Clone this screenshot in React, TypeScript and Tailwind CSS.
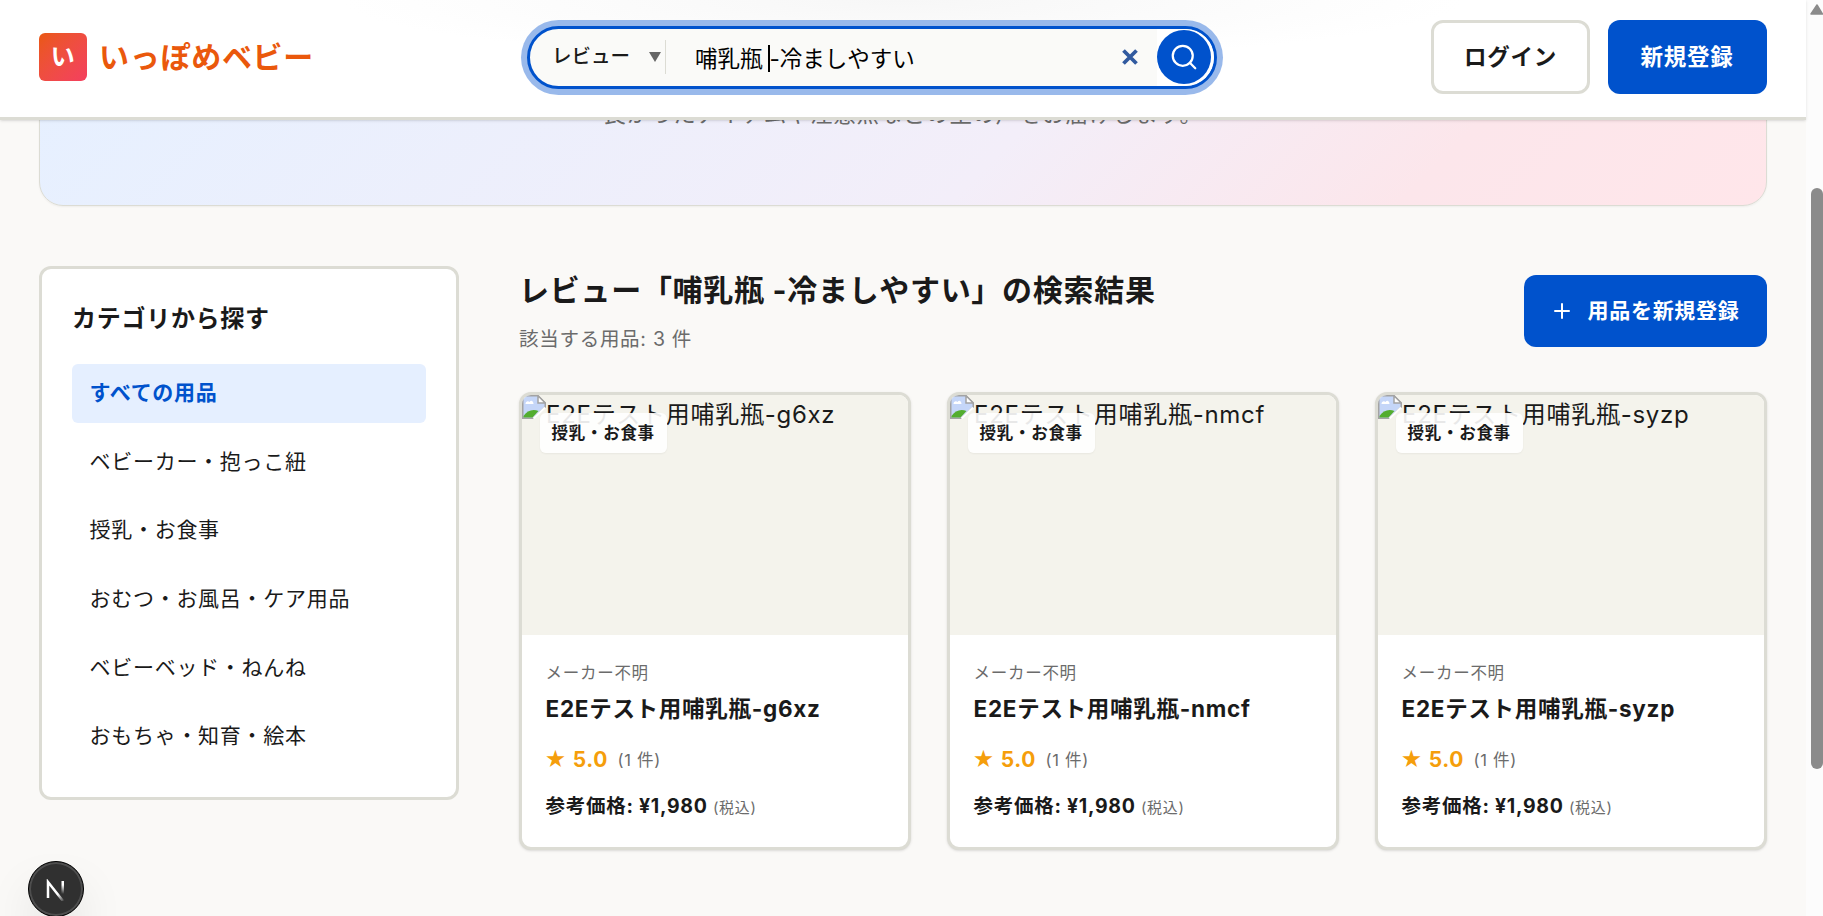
import { Search, Plus } from 'lucide-react';

interface Product {
  id: string;
  name: string;
  maker: string;
  category: string;
  rating: string;
  reviews: number;
  price: string;
}

const categories = [
  'すべての用品',
  'ベビーカー・抱っこ紐',
  '授乳・お食事',
  'おむつ・お風呂・ケア用品',
  'ベビーベッド・ねんね',
  'おもちゃ・知育・絵本',
];

const products: Product[] = ['g6xz', 'nmcf', 'syzp'].map(id => ({
  id,
  name: `E2Eテスト用哺乳瓶-${id}`,
  maker: 'メーカー不明',
  category: '授乳・お食事',
  rating: '5.0',
  reviews: 1,
  price: '1,980',
}));

function BrokenImageIcon() {
  return (
    <svg viewBox="0 0 24 24" className="w-6 h-6 shrink-0">
      <path d="M0.75 0.75H16L23.250 8V12L11 23.250H0.75Z" fill="#c5d6f8" stroke="#a3a3a3" strokeWidth="1.500" />
      <path d="M3.500 9C3.500 6.500 6 5.500 7.500 7C9 4.500 11.500 6 11.500 9Z" fill="#fff" />
      <path d="M1.500 22.500V21C5 15.500 11 13.500 16.500 16L10.500 22.500Z" fill="#53ad2f" />
      <path d="M16 0.75V8H23.250Z" fill="#fff" stroke="#a3a3a3" strokeWidth="1.500" />
      <path d="M23 12.500L11.500 23.500" stroke="#fff" strokeWidth="2" />
    </svg>
  );
}

function Header() {
  return (
    <header className="relative z-10 h-[120px] shrink-0 bg-white bg-[radial-gradient(ellipse_560px_60px_at_50%_0,#f7f7f7,#ffffff)] border-b-[3px] border-[#dcdcd4] shadow-sm">
      <div className="h-[114px] px-[39px] flex items-center">
        <div className="w-[488px] flex items-center gap-3">
          <div className="w-12 h-12 rounded-md bg-linear-to-br from-[#ea580c] to-[#f43f5e] flex items-center justify-center text-white font-bold text-[24px] leading-none">
            い
          </div>
          <span className="text-[30px] font-bold text-[#ea580c] leading-none">いっぽめベビー</span>
        </div>

        <div className="w-[690px] h-[63px] flex items-center overflow-hidden rounded-full border-[3px] border-[#0052cc] bg-[#fafaf8] ring-6 ring-[#99b9eb]">
          <div className="w-[136px] h-[34px] pl-[22px] pr-[4px] flex items-center justify-between border-r border-[#dcdcd4] text-[19.500px] font-medium tracking-normal">
            <span>レビュー</span>
            <svg viewBox="0 0 12 10" className="w-3 h-2.5">
              <path d="M0 0H12L6 10Z" fill="#666" />
            </svg>
          </div>
          <div className="flex-1 pl-[29px] pt-[3px] flex items-center text-[22.500px] text-black tracking-normal">
            <span>哺乳瓶</span>
            <span className="w-[2px] h-[27px] ml-[5px] bg-black" />
            <span>-冷ましやすい</span>
          </div>
          <svg viewBox="0 0 16 16" className="w-4 h-4 mr-[19px]">
            <path d="M1.500 1.500L14.500 14.500M14.500 1.500L1.500 14.500" stroke="#315a9f" strokeWidth="3.800" />
          </svg>
          <div className="w-[57px] h-[57px] flex items-center rounded-r-full bg-white">
            <button className="w-[54px] h-[54px] rounded-full bg-[#0052cc] text-white flex items-center justify-center">
              <Search size={30} strokeWidth={1.8} />
            </button>
          </div>
        </div>

        <div className="ml-auto flex gap-[18px] text-[22.500px] font-bold">
          <button className="w-[159px] h-[74px] rounded-xl border-[3px] border-[#dcdcd4] bg-white">ログイン</button>
          <button className="w-[159px] h-[74px] pr-px rounded-xl bg-[#0052cc] text-white">新規登録</button>
        </div>
      </div>
    </header>
  );
}

function Sidebar() {
  return (
    <aside className="w-[420px] h-[534px] shrink-0 bg-white rounded-xl border-[3px] border-[#dcdcd4] px-[30px] pt-[30px]">
      <h2 className="h-[39px] text-[24px] leading-[39px] font-bold">カテゴリから探す</h2>
      <ul className="mt-[26px] flex flex-col gap-[9.600px]">
        {categories.map((category, i) => (
          <li
            key={category}
            className={`h-[59px] px-[17.500px] pb-px flex items-center rounded-md text-[21px] ${
              i === 0 ? 'bg-[#e5efff] text-[#0052cc] font-bold' : ''
            }`}
          >
            {category}
          </li>
        ))}
      </ul>
    </aside>
  );
}

function ProductCard({ product }: { product: Product }) {
  return (
    <article className="h-[458px] bg-white rounded-xl border-[3px] border-[#dcdcd4] shadow-sm overflow-hidden">
      <div className="relative h-60 bg-[#f4f3ec]">
        <div className="flex items-start text-[24px] leading-[39px] whitespace-nowrap">
          <BrokenImageIcon />
          <span>{product.name}</span>
        </div>
        <span className="absolute left-[18px] top-[18px] h-10 pl-[11.500px] pr-3 flex items-center rounded-md bg-white/90 shadow-xs text-[16.500px] font-bold">
          {product.category}
        </span>
      </div>
      <div className="px-[23.500px] pt-6">
        <p className="h-[28px] text-[16.500px] leading-[28px] text-[#6b6b6b]">{product.maker}</p>
        <h3 className="mt-[4px] h-[36px] text-[22.500px] leading-[36px] font-bold">{product.name}</h3>
        <div className="mt-[16px] h-[34px] flex items-center">
          <span className="text-[21px] font-bold text-[#f59e0b] -ml-px tracking-[0.600px]">★ {product.rating}</span>
          <span className="ml-[9.500px] text-[16.500px] text-[#6b6b6b]">({product.reviews} 件)</span>
        </div>
        <p className="mt-[12px] h-[34px] text-[19.500px] leading-[34px] font-bold">
          参考価格: ¥{product.price} <span className="text-[15px] font-normal text-[#6b6b6b]">(税込)</span>
        </p>
      </div>
    </article>
  );
}

function Scrollbar() {
  return (
    <div className="w-[17px] shrink-0 bg-[#fcfcfc] pl-[4px] pt-[4px]">
      <svg viewBox="0 0 13 11" className="w-[13px] h-[11px]">
        <path d="M7 1L12.500 10H1Z" fill="#8b8b8b" stroke="#8b8b8b" strokeWidth="1.500" strokeLinejoin="round" />
      </svg>
      <div className="mt-[173px] ml-px w-3 h-[581px] rounded-full bg-[#8b8b8b]" />
    </div>
  );
}

export default function App() {
  return (
    <div className="h-[916px] flex overflow-hidden bg-[#faf9f7] text-[#1a1a1a] tracking-[0.720px] leading-normal font-[Inter,'Noto_Sans_CJK_JP',sans-serif]">
      <div className="relative flex-1 flex flex-col">
        <Header />

        <main className="px-[39px]">
          <section className="-mt-[240px] h-[326px] rounded-3xl border border-[#dcdcd4] shadow-xs bg-[linear-gradient(135deg,#e6f0ff_10%,#f3eef9_60%,#fce6eb_82%,#ffe6ea)] flex flex-col justify-end items-center">
            <p className="mb-[73px] text-[22.500px] leading-[36px] text-[#6b6b6b]">
              良かったアイテムや注意点などの生の声をお届けします。
            </p>
          </section>

          <div className="mt-[60px] flex gap-[60px]">
            <Sidebar />
            <section className="flex-1">
              <div className="flex items-start justify-between">
                <div>
                  <h1 className="h-[48px] text-[30px] leading-[49px] font-bold">
                    レビュー「哺乳瓶 -冷ましやすい」の検索結果
                  </h1>
                  <p className="mt-[8px] text-[19.500px] leading-[34px] text-[#6b6b6b]">
                    該当する用品: {products.length} 件
                  </p>
                </div>
                <button className="mt-[9px] w-[243px] h-[72px] flex items-center justify-center gap-[13px] pr-px rounded-xl bg-[#0052cc] text-white text-[21px] font-bold">
                  <Plus size={24} strokeWidth={2} />
                  用品を新規登録
                </button>
              </div>
              <div className="mt-[36px] grid grid-cols-3 gap-9">
                {products.map(product => (
                  <ProductCard key={product.id} product={product} />
                ))}
              </div>
            </section>
          </div>
        </main>

        <div className="absolute left-7 top-[861px] z-20 w-14 h-14 rounded-full bg-[#303030] border border-black inset-ring-2 inset-ring-white/15 shadow-2xl flex items-center justify-center">
          <svg viewBox="0 0 20 22" className="mt-px w-5 h-[22px]" fill="none">
            <defs>
              <linearGradient id="stem" x1="0" y1="0" x2="0" y2="1">
                <stop offset="0.3" stopColor="#fff" />
                <stop offset="1" stopColor="#fff" stopOpacity="0" />
              </linearGradient>
              <linearGradient id="diagonal" gradientUnits="userSpaceOnUse" x1="12" y1="15" x2="18" y2="23">
                <stop stopColor="#fff" />
                <stop offset="1" stopColor="#fff" stopOpacity="0" />
              </linearGradient>
            </defs>
            <path d="M2 19V3L17 22" stroke="url(#diagonal)" strokeWidth="2.500" />
            <rect x="15.500" y="2" width="2.500" height="13" fill="url(#stem)" />
          </svg>
        </div>
      </div>
      <Scrollbar />
    </div>
  );
}
